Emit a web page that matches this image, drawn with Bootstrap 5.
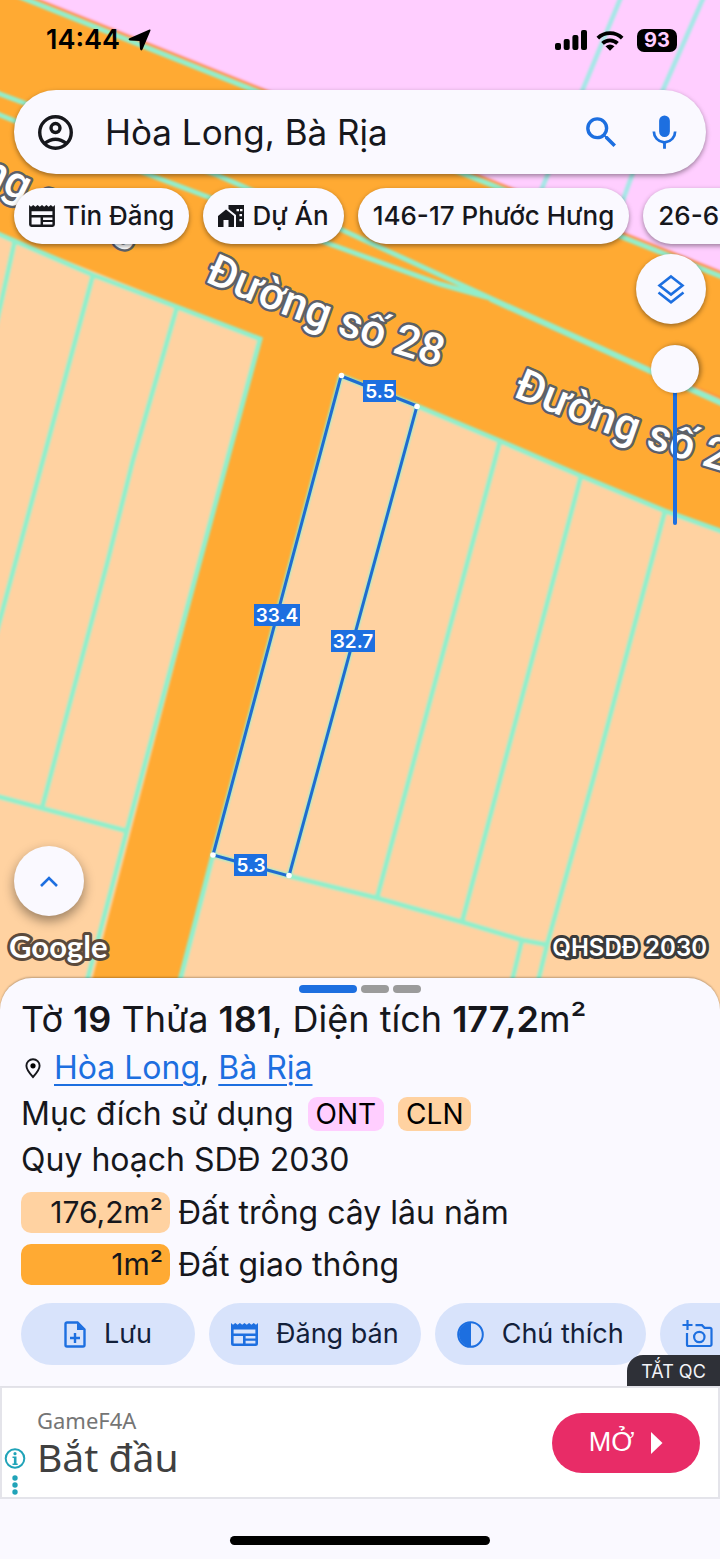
<!DOCTYPE html>
<html lang="vi">
<head>
<meta charset="utf-8">
<meta name="viewport" content="width=device-width, initial-scale=1">
<title>Bản đồ quy hoạch</title>
<link href="https://cdn.jsdelivr.net/npm/bootstrap@5.3.0/dist/css/bootstrap.min.css" rel="stylesheet">
<style>
:root { --surface:#faf9ff; --ink:#16171c; --blue:#1d6fe0; --tonal:#d8e3fb; }
body { font-family: Inter, "Liberation Sans", sans-serif; color: var(--ink); background: var(--surface); }
button { font-family: inherit; }
svg { display: block; flex: none; }

.map-area { isolation: isolate; padding-bottom: 41px; background: #ffaa33; }
.map-canvas { position: absolute; inset: 0; width: 100%; height: 100%; z-index: -1; }
.road-name { font: 500 44px Roboto, sans-serif; fill: #fff; stroke: #5c6068; stroke-width: 5px; stroke-linejoin: round; paint-order: stroke; }
.edge-size { font: 600 19px Inter, sans-serif; fill: #fff; text-anchor: middle; }

.status-bar { height: 90px; padding: 0 43px 10px 46px; color: #000; }
.clock { font-size: 27px; font-weight: 600; line-height: 32px; }
.battery { width: 40px; height: 23px; border-radius: 7px; background: #000; color: #ffceff; font-size: 20px; line-height: 23px; font-weight: 700; }

.raised { background: var(--surface); box-shadow: 0 2px 5px rgba(0,0,0,.4); }
.search-bar { height: 84px; margin: 0 14px; padding: 0 20px; }
.search-bar input { font-size: 35px; line-height: 44px; color: var(--ink); margin-left: 28px; padding: 0; }
.search-bar input:focus { background: transparent; box-shadow: none; }
.icon-btn { border: 0; padding: 0; background: none; color: var(--blue); }
.account { color: var(--ink); }
.find { margin-right: 21px; }
.chip-row { padding: 14px 14px 10px; gap: 14px; }
.chip { height: 56px; border: 0; padding: 0 15px; gap: 8px; font-size: 26px; font-weight: 500; line-height: 32px; color: var(--ink); flex: none; }
.chip-wide { padding-right: 40px; }
.round-btn { width: 70px; height: 70px; border: 0; padding: 0; color: var(--blue); }
.map-tools { padding-right: 14px; gap: 21px; }

/* A horizontal range turned upright, maximum at the top */
.opacity-slot { width: 48px; height: 180px; margin-right: 7px; }
.opacity-slot input { position: absolute; top: 180px; left: 0; width: 180px; height: 48px; margin: 0; transform: rotate(-90deg); transform-origin: 0 0; -webkit-appearance: none; appearance: none; background: none; }
.opacity-slot input::-webkit-slider-runnable-track { height: 4px; background: var(--blue); border-radius: 2px; }
.opacity-slot input::-webkit-slider-thumb { -webkit-appearance: none; width: 48px; height: 48px; margin-top: -22px; border-radius: 50%; background: var(--surface); box-shadow: 0 2px 5px rgba(0,0,0,.4); }

.collapse-btn { margin-left: 14px; box-shadow: 0 5px 12px rgba(0,0,0,.4); }
.map-credit { height: 40px; padding: 0 9px 0 4px; margin-top: 13px; }
.layer-label { font: 600 24px Inter, sans-serif; fill: #fff; stroke: #3b3b3b; stroke-width: 6px; stroke-linejoin: round; paint-order: stroke; }
.maker { font: 700 31px Lato, sans-serif; fill: #fff; stroke: #5b4a3c; stroke-width: 6px; stroke-linejoin: round; paint-order: stroke; }

.sheet { margin-top: -32px; padding: 7px 0 21px; border-radius: 32px 32px 0 0; background: var(--surface); box-shadow: 0 -1px 2px rgba(0,0,0,.25); }
.pager { gap: 4px; }
.pager span { width: 28px; height: 8px; border-radius: 4px; background: #9b9b9b; }
.pager .current { width: 58px; background: var(--blue); }
.sheet-body { padding: 0 21px; font-size: 32px; line-height: 46px; }
.plot-title { font-size: 36px; line-height: 52px; font-weight: 400; }
.plot-title b { font-weight: 600; }
.sheet-body a { color: var(--blue); text-underline-offset: 5px; text-decoration-thickness: 2px; }
.pin { margin: 0 13px 0 4px; }
.code { height: 34px; border-radius: 9px; padding: 0 8px; font-size: 28px; line-height: 34px; color: #000; }
.purpose { gap: 14px; }
.zone-list { margin: 9px 0 18px; gap: 11px; line-height: 41px; }
.zone-size { width: 149px; height: 41px; padding-right: 7px; border-radius: 10px; font-size: 30px; }
.pink { background: #ffceff; }
.peach { background: #ffd2a1; }
.amber { background: #ffaa33; }
.zone-list li { gap: 8px; }
.action-row { gap: 14px; padding-left: 21px; }
.action { height: 62px; border: 0; gap: 18px; padding: 0 22px; font-size: 27px; line-height: 34px; background: var(--tonal); color: #12203a; flex: none; }
.action svg { color: var(--blue); }
.action-save { width: 174px; }
.action-more { width: 150px; }
.ad-close { right: 0; bottom: 0; width: 93px; height: 31px; border: 0; padding: 2px 0 0; border-radius: 16px 0 0 0; background: #2e3037; color: #f3f3f8; font-size: 18px; line-height: 29px; }

.ad { height: 113px; border: 2px solid #e4e4ea; background: #fff; padding: 0 18px 0 2px; font-family: "Noto Sans", sans-serif; }
.ad-marks { width: 24px; padding-top: 59px; color: #20a3b8; }
.ad-text { padding: 0 0 4px 9px; }
.ad-from { font-size: 22px; line-height: 32px; color: #757575; }
.ad-head { font-size: 39px; line-height: 42px; color: #404040; }
.ad-open { width: 148px; height: 60px; border: 0; padding: 0; gap: 17px; background: #e82c67; color: #fff; font-family: "Liberation Sans", sans-serif; font-size: 27px; }
.home-zone { height: 60px; padding-top: 37px; }
.home-line { width: 36%; height: 9px; border-radius: 5px; background: #000; }
</style>
</head>
<body>
<svg width="0" height="0" class="position-absolute" aria-hidden="true">
  <symbol id="i-news" viewBox="0 0 27 23">
    <path fill="currentColor" fill-rule="evenodd" d="M0 0l2 1.800 2.300-1.800 2.300 1.800 2.300-1.800 2.300 1.800 2.300-1.800 2.300 1.800 2.300-1.800 2.300 1.800 2.300-1.800 2.300 1.800 2-1.800V20.500a2.500 2.500 0 0 1-2.500 2.500h-22A2.500 2.500 0 0 1 0 20.500zM2.600 6.500v4H24.400v-4zM2.600 13V20.400h9.400V13zM14.600 13v2.600H24.400v-2.600zM14.600 17.800v2.600H24.400v-2.600z"/>
  </symbol>
</svg>
<main class="d-flex flex-column min-vh-100 overflow-hidden">
  <section class="map-area position-relative d-flex flex-column flex-grow-1">
    <svg class="map-canvas" viewBox="0 0 720 1010" preserveAspectRatio="xMidYMin slice">
      <defs>
        <filter id="soft" filterUnits="userSpaceOnUse" x="-20" y="-20" width="760" height="1060"><feGaussianBlur stdDeviation="1"/></filter>
        <path id="road-a" d="M204 281Q300 326 460 373"/>
        <path id="road-b" d="M512 396Q606 436 702 465L800 494"/>
        <path id="road-c" d="M-95 144Q10 196 86 232L190 280"/>
      </defs>
      <rect width="720" height="1010" fill="#ffaa33"/>
      <g filter="url(#soft)">
        <path d="M-10 -20L740 279V-20z" fill="#ffceff"/>
        <path d="M-2 -16L740 280M430 270L550 327L740 407" stroke="#ff6a4a" stroke-opacity=".4" stroke-width="4" fill="none"/>
        <path d="M-20 226L0 234L260 338L79 1030H-20z" fill="#ffd2a1"/>
        <path d="M341 376L417 406L500 440L581 475L665 510L740 538V1030H168L213 855z" fill="#ffd2a1"/>
        <g fill="none" stroke="#a9e6e8" stroke-width="5">
          <path d="M626 -15L543 186L530 215M709 -15L663 90L623 200L614 230"/>
        </g>
        <g fill="none" stroke="#93eecb" stroke-width="5">
          <path d="M-10 -15L740 284"/>
          <path d="M-20 86L0 94L217 175L340 229L490 298L740 411M-20 107L0 115L150 175L208 197L327 243L440 284L490 298"/>
          <path d="M490 299L740 412"/>
          <path d="M-20 226L93 275L177 307L260 339L200 560L127 830L74 1030M15 240L-5 330M93 275L43 460L-6 642M177 307L133 460L108 560L42 808M-20 792L0 797L127 831"/>
          <path d="M341 376L417 406L500 441L581 476L665 511L740 538M341 376L213 855L167 1030M417 406L289 876M213 855L289 876L377 898L462 922L522 940L548 945M500 441L377 898M581 476L462 922M665 511L593 780L548 941L526 1030M522 940L500 1030"/>
        </g>
      </g>
      <g class="road-name">
        <text><textPath href="#road-a">Đường số 28</textPath></text>
        <text><textPath href="#road-b">Đường số 28</textPath></text>
        <text><textPath href="#road-c">Đường số 28</textPath></text>
      </g>
      <path d="M341 376L417 406L289 876L213 855z" fill="none" stroke="#206bd0" stroke-width="3"/>
      <g fill="#fff"><circle cx="341.500" cy="375.500" r="2.800"/><circle cx="417" cy="406.500" r="2.800"/><circle cx="289" cy="875.500" r="2.800"/><circle cx="213" cy="855" r="2.800"/></g>
      <path fill="#1d6fe0" d="M363 380h33v22h-33zM254 604h46v22h-46zM331 630h44v22h-44zM234 854h33v22h-33z"/>
      <g class="edge-size">
        <text x="380" y="398">5.5</text><text x="277" y="622">33.4</text><text x="353" y="648">32.7</text><text x="251" y="872">5.3</text>
      </g>
    </svg>

    <div class="status-bar d-flex align-items-center">
      <span class="clock">14:44</span>
      <svg class="ms-2" width="23" height="22" viewBox="0 0 23 22" aria-hidden="true"><path d="M21.500 0.500Q23 0 22.300 2L14.500 20.500Q13 22.500 12 20L11.500 12L2 11.500Q-.5 10.500 1.500 9.200z"/></svg>
      <span class="flex-grow-1"></span>
      <svg width="32" height="20" viewBox="0 0 32 20" aria-hidden="true"><rect y="13" width="6" height="7" rx="2"/><rect x="8.700" y="9" width="6" height="11" rx="2"/><rect x="17.400" y="5" width="6" height="15" rx="2"/><rect x="26" width="6" height="20" rx="2"/></svg>
      <svg class="ms-2 me-2" width="30" height="21" viewBox="0 0 32 22" aria-hidden="true"><g fill="none" stroke="#000" stroke-width="4"><path d="M3 8.500A18.500 18.500 0 0 1 29 8.500"/><path d="M8 14A11.500 11.500 0 0 1 24 14"/></g><path d="M11.200 17.200Q16 13.500 20.800 17.200L16 21.800z"/></svg>
      <span class="battery text-center ms-1">93</span>
    </div>

    <div class="search-bar raised rounded-pill d-flex align-items-center">
      <button class="icon-btn account" aria-label="Tài khoản"><svg width="43" height="43" viewBox="0 0 24 24" fill="none" stroke="currentColor" stroke-width="1.900"><circle cx="12" cy="12" r="8.800"/><circle cx="12" cy="9.500" r="2.500"/><path d="M5.800 18.200Q12 13.300 18.200 18.200"/></svg></button>
      <input class="form-control border-0 bg-transparent shadow-none flex-grow-1" type="text" value="Hòa Long, Bà Rịa" aria-label="Tìm kiếm">
      <button class="icon-btn find" aria-label="Tìm"><svg width="41" height="41" viewBox="0 0 24 24" fill="currentColor"><path d="M15.500 14h-.79l-.28-.27A6.470 6.470 0 0 0 16 9.500 6.500 6.500 0 1 0 9.500 16c1.610 0 3.090-.59 4.230-1.570l.27.28v.79l5 4.990L20.490 19zm-6 0a4.500 4.500 0 1 1 0-9 4.500 4.500 0 0 1 0 9z"/></svg></button>
      <button class="icon-btn" aria-label="Giọng nói"><svg width="43" height="43" viewBox="0 0 24 24" fill="currentColor"><path d="M12 14.500a3 3 0 0 0 3-3v-6a3 3 0 0 0-6 0v6a3 3 0 0 0 3 3zM18.700 11.500h-1.500a5.200 5.200 0 0 1-10.400 0H5.300a6.700 6.700 0 0 0 5.900 6.600V21h1.600v-2.900a6.700 6.700 0 0 0 5.900-6.600z"/></svg></button>
    </div>

    <div class="chip-row d-flex">
      <button class="chip raised rounded-pill d-flex align-items-center"><svg width="26" height="22"><use href="#i-news"/></svg>Tin Đăng</button>
      <button class="chip raised rounded-pill d-flex align-items-center"><svg width="26" height="22" viewBox="0 0 26 22" fill="currentColor"><path d="M0 11L8 4.500L16 11V22H10.500V15H5.500V22H0z"/><path fill-rule="evenodd" d="M10.500 0H26V22H18V10L10.500 4zM18.500 4v2.300h2.500V4zM22 4v2.300h2.500V4zM21.500 9v2.300H24V9zM21.500 14v2.300H24V14z"/></svg>Dự Án</button>
      <button class="chip raised rounded-pill">146-17 Phước Hưng</button>
      <button class="chip chip-wide raised rounded-pill">26-6</button>
    </div>

    <div class="map-tools d-flex flex-column align-items-end">
      <button class="round-btn raised rounded-circle d-flex align-items-center justify-content-center" aria-label="Lớp bản đồ"><svg width="28" height="31" viewBox="0 0 28 31" fill="none" stroke="currentColor" stroke-width="2.600"><path d="M14 2.500L25.500 11.500L14 20.500L2.500 11.500z"/><path d="M1.500 18.500L14 28.300L26.500 18.500"/></svg></button>
      <div class="opacity-slot position-relative"><input type="range" min="0" max="100" value="100" aria-label="Độ mờ"></div>
    </div>

    <div class="mt-auto">
      <button class="round-btn collapse-btn raised rounded-circle d-flex align-items-center justify-content-center" aria-label="Mở rộng"><svg width="18" height="11" viewBox="0 0 18 11" fill="none" stroke="currentColor" stroke-width="2.600"><path d="M1 10L9 2L17 10"/></svg></button>
      <div class="map-credit d-flex justify-content-between">
        <svg width="120" height="40"><text class="maker" x="5" y="29">Google</text></svg>
        <svg width="180" height="40"><text class="layer-label" x="176" y="27" text-anchor="end">QHSDĐ 2030</text></svg>
      </div>
    </div>
  </section>

  <section class="sheet position-relative">
    <div class="pager d-flex justify-content-center"><span class="current"></span><span></span><span></span></div>
    <div class="sheet-body">
      <h1 class="plot-title m-0">Tờ <b>19</b> Thửa <b>181</b>, Diện tích <b>177,2</b>m²</h1>
      <div class="d-flex align-items-center">
        <svg class="pin" width="16" height="21" viewBox="0 0 16 21"><path d="M8 1.200A6.600 6.600 0 0 0 1.400 7.800C1.400 12 8 19 8 19S14.600 12 14.600 7.800A6.600 6.600 0 0 0 8 1.200z" fill="none" stroke="currentColor" stroke-width="1.900"/><circle cx="8" cy="7.800" r="2.600"/></svg>
        <div><a href="#hoa-long">Hòa Long</a>, <a href="#ba-ria">Bà Rịa</a></div>
      </div>
      <div class="purpose d-flex align-items-center"><span>Mục đích sử dụng</span><span class="code pink">ONT</span><span class="code peach">CLN</span></div>
      <div>Quy hoạch SDĐ 2030</div>
      <ul class="zone-list list-unstyled d-flex flex-column">
        <li class="d-flex"><span class="zone-size peach text-end">176,2m²</span>Đất trồng cây lâu năm</li>
        <li class="d-flex"><span class="zone-size amber text-end">1m²</span>Đất giao thông</li>
      </ul>
    </div>
    <div class="action-row d-flex">
      <button class="action action-save rounded-pill d-flex align-items-center justify-content-center"><svg width="22" height="27" viewBox="0 0 22 27" fill="none" stroke="currentColor" stroke-width="2.400"><path d="M13.500 1.500H3A1.500 1.500 0 0 0 1.500 3V24A1.500 1.500 0 0 0 3 25.500H19A1.500 1.500 0 0 0 20.500 24V8.500z"/><path d="M13 2V9H20z" fill="currentColor" stroke="none"/><path d="M11 12v10M6 17h10"/></svg>Lưu</button>
      <button class="action rounded-pill d-flex align-items-center"><svg width="27" height="23"><use href="#i-news"/></svg>Đăng bán</button>
      <button class="action rounded-pill d-flex align-items-center"><svg width="27" height="27" viewBox="0 0 27 27"><circle cx="13.500" cy="13.500" r="12.300" fill="none" stroke="currentColor" stroke-width="2"/><path d="M14 1.500a12 12 0 0 0 0 24z" fill="currentColor"/></svg>Chú thích</button>
      <button class="action action-more rounded-pill d-flex align-items-center" aria-label="Chụp ảnh"><svg width="31" height="28" viewBox="0 0 31 28" fill="none" stroke="currentColor" stroke-width="2.200"><path d="M5.500 0V10M.5 5H10.500M13.500 5.200H20L22.500 7.800H28A1.500 1.500 0 0 1 29.500 9.300V24.500A1.500 1.500 0 0 1 28 26H6.500A1.500 1.500 0 0 1 5 24.500V13"/><circle cx="17.300" cy="17" r="5.200"/></svg></button>
    </div>
    <button class="ad-close position-absolute">TẮT QC</button>
  </section>

  <aside class="ad d-flex">
    <div class="ad-marks"><svg width="22" height="50" viewBox="0 0 22 50" fill="currentColor"><circle cx="11" cy="11.500" r="9.300" fill="none" stroke="currentColor" stroke-width="2"/><circle cx="11" cy="6.700" r="1.600"/><path d="M8.500 9.500h4v7h1.200v1.500H8.500v-1.500h1.400v-5.500H8.500z"/><circle cx="11" cy="31" r="2.700"/><circle cx="11" cy="38" r="2.700"/><circle cx="11" cy="45" r="2.700"/></svg></div>
    <div class="ad-text flex-grow-1 align-self-center"><div class="ad-from">GameF4A</div><div class="ad-head">Bắt đầu</div></div>
    <button class="ad-open rounded-pill align-self-center d-flex align-items-center justify-content-center">MỞ<svg width="12" height="22" viewBox="0 0 12 22" fill="currentColor"><path d="M0 0L11.500 11L0 22z"/></svg></button>
  </aside>
  <div class="home-zone d-flex justify-content-center"><div class="home-line"></div></div>
</main>
<script src="https://cdn.jsdelivr.net/npm/bootstrap@5.3.0/dist/js/bootstrap.bundle.min.js"></script>
</body>
</html>
